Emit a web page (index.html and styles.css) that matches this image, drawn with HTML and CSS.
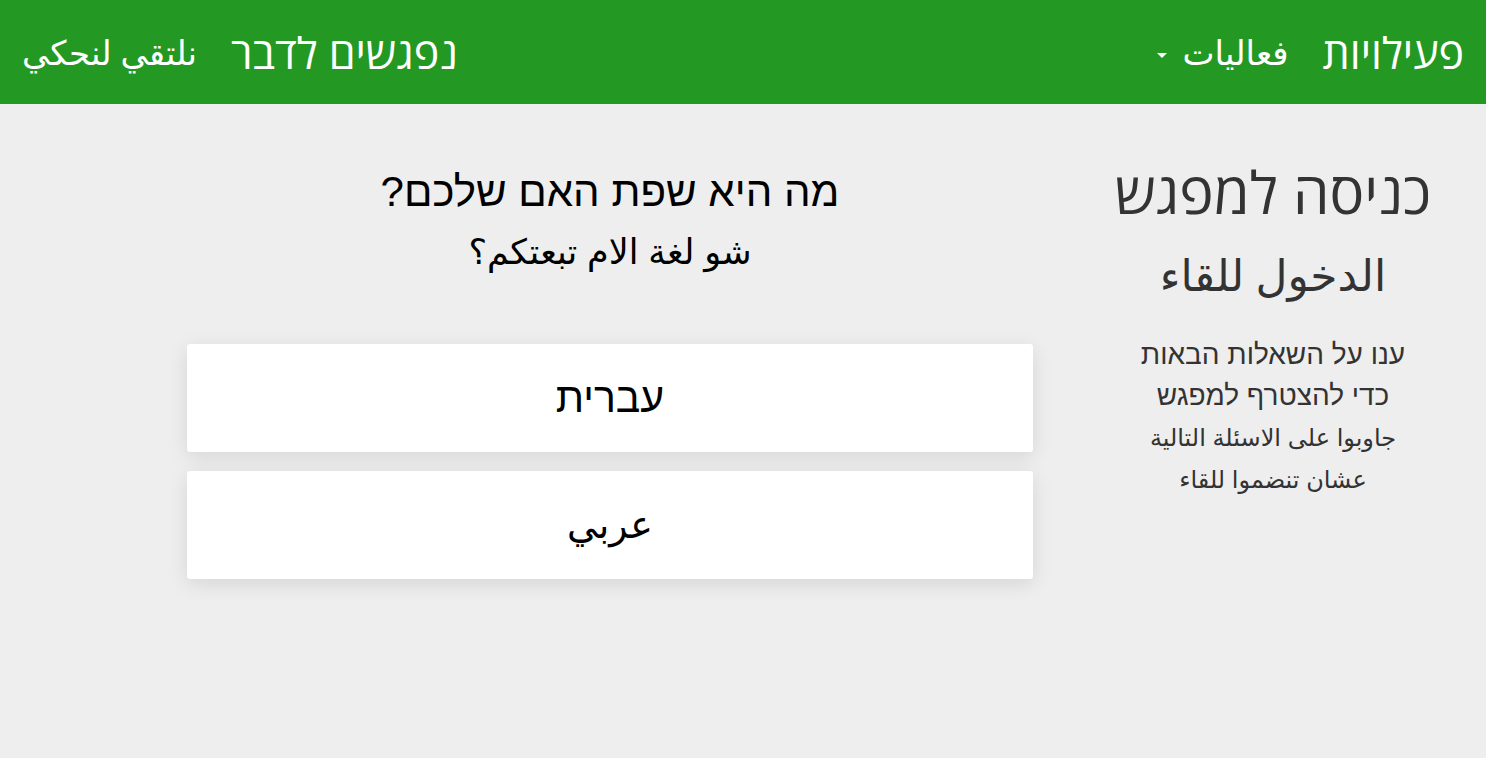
FILE: index.html
```html
<!DOCTYPE html>
<html lang="he" dir="rtl">
<head>
<meta charset="utf-8">
<title>כניסה למפגש</title>
<link rel="stylesheet" href="styles.css">
</head>
<body>
<nav class="navbar">
  <div class="nav-right">
    <a class="brand" href="#">פעילויות</a>
    <a class="nav-link dropdown" href="#">فعاليات<span class="caret"></span></a>
  </div>
  <div class="nav-left">
    <a class="nav-link he" href="#">נפגשים לדבר</a>
    <a class="nav-link ar" href="#">نلتقي لنحكي</a>
  </div>
</nav>
<div class="page">
  <aside class="sidebar">
    <h1 class="title">כניסה למפגש</h1>
    <h1 class="title ar-title">الدخول للقاء</h1>
    <p class="intro">ענו על השאלות הבאות<br>כדי להצטרף למפגש<br><span class="ar-small">جاوبوا على الاسئلة التالية</span><br><span class="ar-small">عشان تنضموا للقاء</span></p>
  </aside>
  <main class="main">
    <h2 class="question">מה היא שפת האם שלכם?</h2>
    <h2 class="question ar-q">شو لغة الام تبعتكم؟</h2>
    <div class="options">
      <button class="option">עברית</button>
      <button class="option option-ar">عربي</button>
    </div>
  </main>
</div>
</body>
</html>
```
FILE: styles.css
```css
html, body {
  margin: 0;
  padding: 0;
}
body {
  background: #eeeeee;
  font-family: "Liberation Sans", "DejaVu Sans", sans-serif;
  color: #333;
  width: 1486px;
  height: 758px;
  overflow: hidden;
}
.navbar {
  height: 104px;
  background: #239923;
  display: flex;
  justify-content: space-between;
  align-items: center;
  padding: 0 22px;
  box-sizing: border-box;
}
.navbar a {
  color: #fff;
  text-decoration: none;
}
.nav-right, .nav-left {
  display: flex;
  align-items: center;
}
.brand {
  font-family: "Open Sans", "DejaVu Sans", sans-serif;
  font-size: 43px;
  margin-left: 34px;
}
.nav-link {
  font-family: "Open Sans", "DejaVu Sans", sans-serif;
  font-size: 34px;
}
.dropdown {
  display: flex;
  align-items: center;
}
.nav-left .he {
  font-size: 43px;
  margin-left: 34px;
}
.caret {
  display: inline-block;
  width: 0;
  height: 0;
  border-top: 5px solid #fff;
  border-left: 5px solid transparent;
  border-right: 5px solid transparent;
  margin-right: 16px;
  margin-top: 6px;
}
.page {
  display: flex;
  gap: 70px;
  padding: 0 43px 0 187px;
}
.sidebar {
  width: 340px;
  text-align: center;
  padding-top: 56px;
}
.title {
  font-family: "Open Sans", "DejaVu Sans", sans-serif;
  font-weight: normal;
  font-size: 58px;
  margin: 0;
  line-height: 64px;
  color: #333;
}
.ar-title {
  font-size: 44px;
  margin-top: 18px;
}
.intro {
  margin: 28px 0 0;
  font-size: 28px;
  line-height: 41px;
  color: #333;
}
.ar-small {
  font-size: 24px;
}
.main {
  width: 846px;
  padding-top: 57px;
}
.question {
  text-align: center;
  font-weight: normal;
  font-size: 42px;
  margin: 0;
  line-height: 62px;
  color: #000;
}
.ar-q {
  font-size: 35px;
  line-height: 58px;
}
.options {
  margin-top: 63px;
  display: flex;
  flex-direction: column;
  gap: 19px;
}
.option {
  height: 108px;
  background: #fff;
  border: none;
  border-radius: 3px;
  box-shadow: 0 5px 20px rgba(0, 0, 0, 0.1);
  font-family: "Liberation Sans", "DejaVu Sans", sans-serif;
  font-size: 41px;
  color: #000;
  cursor: pointer;
  padding: 0;
}
.option-ar {
  font-size: 38px;
}
```
